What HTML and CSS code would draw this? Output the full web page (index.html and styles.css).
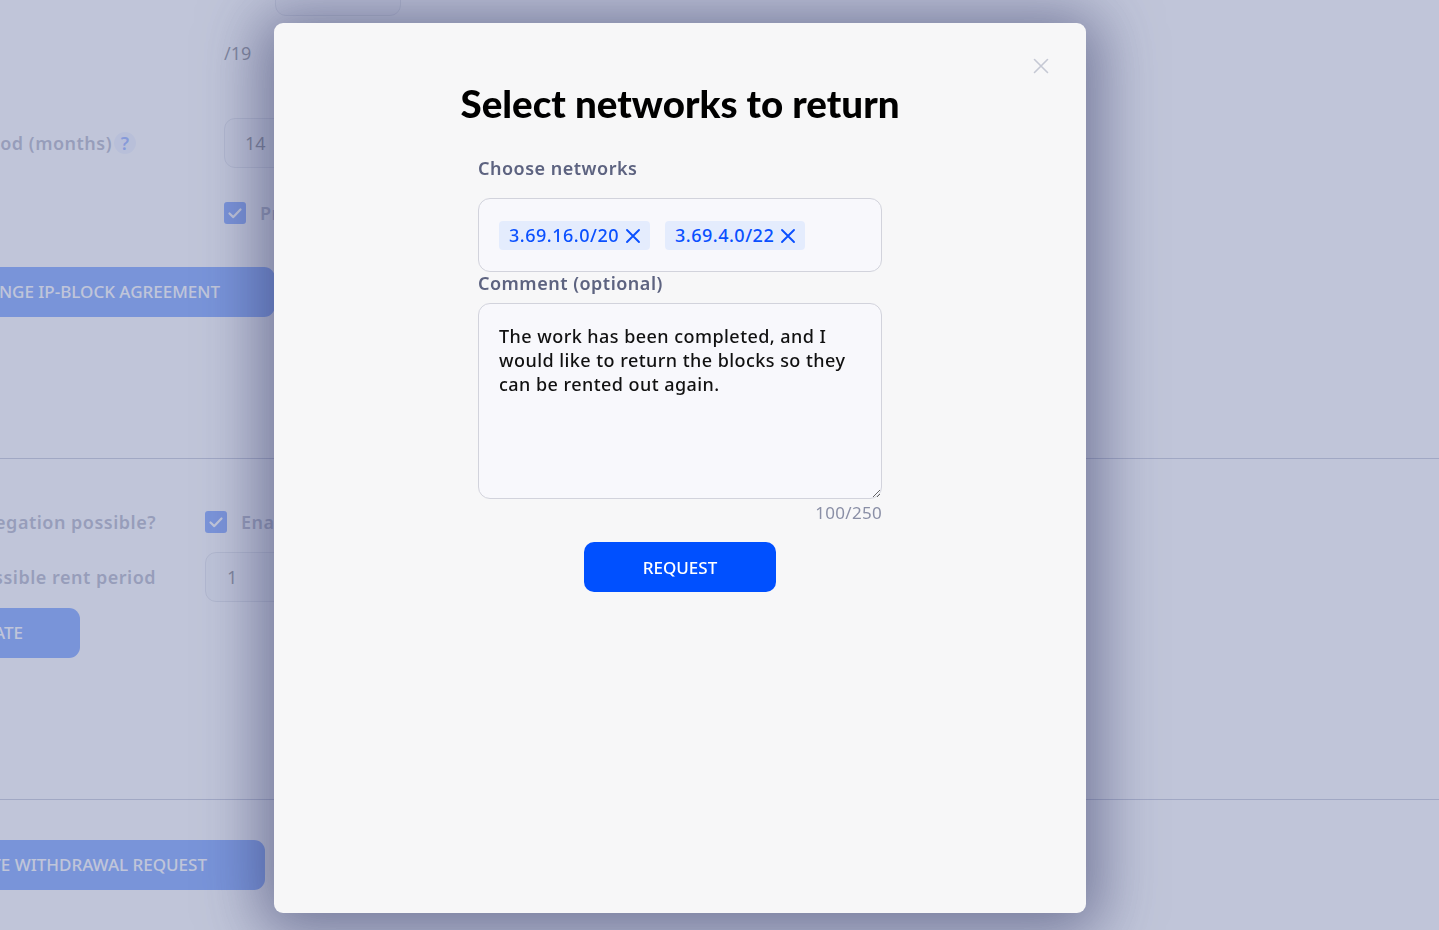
FILE: index.html
```html
<!DOCTYPE html>
<html lang="en">
<head>
<meta charset="utf-8">
<title>Select networks to return</title>
<link rel="stylesheet" href="styles.css">
</head>
<body>
<div class="page">
  <section class="sec sec-1">
    <div class="row row-top">
      <div class="field field-indent"><div class="input"></div></div>
    </div>
    <div class="row row-mask">
      <div class="lbl lbl-1"></div>
      <span class="suffix">/19</span>
    </div>
    <div class="row row-period">
      <div class="lbl lbl-1"><span class="lbl-text">Maximum rent period (months)</span><span class="help">?</span></div>
      <div class="input input-val">14</div>
    </div>
    <div class="row row-check1">
      <div class="lbl lbl-1"></div>
      <span class="checkbox"><svg viewBox="0 0 22 22" width="22" height="22"><path d="M5.5 11.5l3.8 3.6 7.2-7.6" fill="none" stroke="#fff" stroke-width="2.2" stroke-linecap="round" stroke-linejoin="round"/></svg></span>
      <span class="check-text">Prolongation allowed</span>
    </div>
    <div class="row row-btn1">
      <button class="btn btn-agreement">CHANGE IP-BLOCK AGREEMENT</button>
    </div>
  </section>
  <section class="sec sec-2">
    <div class="row row-deleg">
      <div class="lbl lbl-2"><span class="lbl-text">Delegation possible?</span></div>
      <span class="checkbox"><svg viewBox="0 0 22 22" width="22" height="22"><path d="M5.5 11.5l3.8 3.6 7.2-7.6" fill="none" stroke="#fff" stroke-width="2.2" stroke-linecap="round" stroke-linejoin="round"/></svg></span>
      <span class="check-text">Enabled</span>
    </div>
    <div class="row row-min">
      <div class="lbl lbl-2"><span class="lbl-text">Minimum possible rent period</span></div>
      <div class="input input-val input-min">1</div>
    </div>
    <div class="row row-btn2">
      <button class="btn btn-update">UPDATE</button>
    </div>
  </section>
  <section class="sec sec-3">
    <div class="row row-btn3">
      <button class="btn btn-withdraw">CREATE WITHDRAWAL REQUEST</button>
    </div>
  </section>
</div>

<div class="overlay">
  <div class="modal" role="dialog" aria-labelledby="modal-title">
    <button class="close" aria-label="Close">
      <svg viewBox="0 0 16 16" width="16" height="16"><path d="M1.5 1.5l13 13M14.5 1.5l-13 13" stroke="#c5c8d4" stroke-width="1.6" stroke-linecap="round"/></svg>
    </button>
    <h2 class="title" id="modal-title">Select networks to return</h2>
    <form class="form">
      <label class="form-label label-networks">Choose networks</label>
      <div class="select">
        <span class="tag">3.69.16.0/20<svg class="tag-x" viewBox="0 0 16 16" width="16" height="16"><path d="M2 2l12 12M14 2L2 14" stroke="#0a50ff" stroke-width="1.9" stroke-linecap="round"/></svg></span>
        <span class="tag">3.69.4.0/22<svg class="tag-x" viewBox="0 0 16 16" width="16" height="16"><path d="M2 2l12 12M14 2L2 14" stroke="#0a50ff" stroke-width="1.9" stroke-linecap="round"/></svg></span>
      </div>
      <label class="form-label label-comment" for="comment">Comment (optional)</label>
      <textarea id="comment" class="textarea">The work has been completed, and I would like to return the blocks so they can be rented out again.</textarea>
      <div class="counter">100/250</div>
      <div class="actions">
        <button type="button" class="request">REQUEST</button>
      </div>
    </form>
  </div>
</div>
</body>
</html>
```

FILE: styles.css
```css
* { box-sizing: border-box; }

html, body {
  margin: 0;
  height: 100%;
  overflow: hidden;
  background: #ffffff;
  font-family: "Noto Sans", "Open Sans", sans-serif;
}

/* ---------- background page ---------- */
.page {
  margin-top: -35px;
  width: 1439px;
}

.sec {
  display: flex;
  flex-direction: column;
  border-bottom: 1px solid #8f96b5;
}
.sec-1 { padding-bottom: 141px; }
.sec-2 { padding-bottom: 141px; }
.sec-3 { border-bottom: none; }

.row {
  display: flex;
  align-items: center;
}

.lbl {
  display: flex;
  justify-content: flex-end;
  align-items: center;
  flex-shrink: 0;
  white-space: nowrap;
  font-size: 18px;
  font-weight: 600;
  letter-spacing: 0.5px;
  color: #6b7190;
  line-height: 24px;
}
.lbl-1 { width: 224px; padding-right: 88px; }
.lbl-2 { width: 205px; padding-right: 49px; }
.lbl-text { flex-shrink: 0; }

.help {
  flex-shrink: 0;
  width: 22px;
  height: 22px;
  border-radius: 50%;
  background: #e3eaff;
  color: #2f66ff;
  font-size: 18px;
  line-height: 22px;
  text-align: center;
  margin-left: 2px;
  letter-spacing: 0;
}

.field-indent { margin-left: 275px; }

.input {
  width: 126px;
  height: 50px;
  border: 1px solid #c9cdd9;
  border-radius: 11px;
  background: #f5f6fa;
}
.input-val {
  width: 150px;
  display: flex;
  align-items: center;
  padding-left: 20px;
  font-size: 18px;
  color: #1b1d2a;
}
.input-min { padding-left: 21px; }

.row-top { margin-top: 1px; }
.row-mask { margin-top: 25px; height: 24px; }
.suffix { font-size: 18px; color: #232531; line-height: 24px; }
.row-period { margin-top: 53px; }
.row-check1 { margin-top: 33px; height: 24px; }
.row-btn1 { margin-top: 42px; }

.checkbox {
  width: 22px;
  height: 22px;
  border-radius: 3px;
  background: #0a50ff;
  display: inline-flex;
  flex-shrink: 0;
}
.check-text {
  margin-left: 14px;
  font-size: 18px;
  font-weight: 600;
  letter-spacing: 0.5px;
  color: #6b7190;
  white-space: nowrap;
}

.btn {
  height: 50px;
  border: none;
  border-radius: 11px;
  background: #0050ff;
  color: #ffffff;
  font-family: "Noto Sans", sans-serif;
  font-size: 17px;
  font-weight: 500;
  display: flex;
  align-items: center;
  justify-content: flex-end;
  white-space: nowrap;
  flex-shrink: 0;
  padding-bottom: 2px;
}
.btn-agreement { width: 415px; margin-left: -140px; padding-right: 55px; }
.btn-update { width: 220px; margin-left: -140px; padding-right: 57px; }
.btn-withdraw { width: 405px; margin-left: -140px; padding-right: 58px; }

.row-deleg { margin-top: 51px; height: 24px; }
.row-min { margin-top: 18px; }
.row-btn2 { margin-top: 6px; }
.row-btn3 { margin-top: 40px; }

/* ---------- overlay + modal ---------- */
.overlay {
  position: fixed;
  inset: 0;
  background: rgba(168, 174, 202, 0.72);
  display: flex;
  align-items: flex-start;
  justify-content: flex-start;
  padding: 23px 0 0 274px;
}

.modal {
  position: relative;
  width: 812px;
  height: 890px;
  background: #f7f7f8;
  border-radius: 9px;
  box-shadow: 0 6px 60px 14px rgba(40, 44, 92, 0.5);
  padding-top: 56px;
}

.close {
  position: absolute;
  top: 35px;
  right: 37px;
  width: 16px;
  height: 16px;
  padding: 0;
  border: none;
  background: none;
  display: flex;
}

.title {
  margin: 0;
  text-align: center;
  font-family: "Lato", sans-serif;
  font-weight: 900;
  font-size: 38.5px;
  line-height: 48px;
  color: #000000;
}

.form {
  width: 404px;
  margin: 30px auto 0;
  display: flex;
  flex-direction: column;
}

.form-label {
  font-size: 18px;
  font-weight: 600;
  letter-spacing: 0.5px;
  color: #5d6380;
  line-height: 22px;
}
.label-networks { margin-bottom: 19px; }

.select {
  height: 74px;
  border: 1px solid #d2d3dc;
  border-radius: 12px;
  background: #f8f8fc;
  display: flex;
  align-items: center;
  gap: 15px;
  padding: 1px 20px 0;
}

.tag {
  display: inline-flex;
  align-items: center;
  height: 29px;
  padding: 0 9px 0 10px;
  border-radius: 4px;
  background: #e4ecfd;
  color: #0a50ff;
  font-size: 18px;
  letter-spacing: 0.5px;
  line-height: 29px;
  font-weight: 500;
}
.tag-x { margin-left: 6px; }

.label-comment { margin-bottom: 9px; }

.textarea {
  height: 196px;
  border: 1px solid #d2d3dc;
  border-radius: 12px;
  background: #f8f8fc;
  padding: 20px 20px;
  font-family: "Noto Sans", sans-serif;
  font-size: 18px;
  letter-spacing: 0.45px;
  line-height: 24px;
  color: #111111;
  font-weight: 500;
  outline: none;
}

.counter {
  margin-top: 3px;
  text-align: right;
  font-size: 17px;
  letter-spacing: 0.3px;
  color: #8a8fa6;
  line-height: 22px;
}

.actions {
  display: flex;
  justify-content: center;
  margin-top: 18px;
}

.request {
  width: 192px;
  height: 50px;
  border: none;
  border-radius: 10px;
  background: #0050ff;
  color: #ffffff;
  font-family: "Noto Sans", sans-serif;
  font-size: 17px;
  font-weight: 500;
}
```
